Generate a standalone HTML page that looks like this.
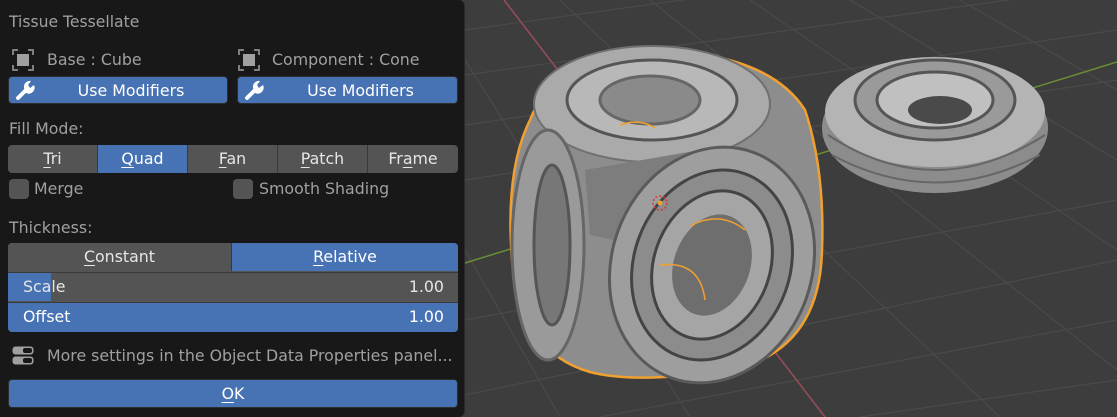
<!DOCTYPE html>
<html><head><style>
*{margin:0;padding:0;box-sizing:border-box}
body{width:1117px;height:417px;overflow:hidden;background:#3d3d3d;font-family:"DejaVu Sans","Liberation Sans",sans-serif;font-size:15.8px;position:relative}
.a{position:absolute}
#panel{left:0;top:0;width:465px;height:417px;background:#181818;border-right:1px solid #2a2a2a;border-radius:0 6px 6px 0}
.lbl{color:#a0a0a0;position:absolute;white-space:nowrap;line-height:18px}
.btn{position:absolute;background:#4772b3;color:#fff;border-radius:4px;text-align:center;line-height:27px;height:28px;border:1px solid #2d2d2d}
.seg{position:absolute;height:28px;line-height:28px;text-align:center;color:#e6e6e6;background:#545454;border-right:1px solid #3a3a3a}
.on{background:#4772b3;color:#fff}
.chk{position:absolute;width:20px;height:20px;background:#545454;border-radius:4px}
u{text-decoration:underline;text-underline-offset:3px}
</style></head><body>
<svg class="a" style="left:465px;top:0" width="652" height="417" viewBox="465 0 652 417">
<g stroke="#4a4a4a" stroke-width="1.2" fill="none">
<line x1="465" y1="30" x2="1117" y2="-60"/><line x1="465" y1="75" x2="1117" y2="-15"/>
<line x1="465" y1="125" x2="1117" y2="30"/><line x1="465" y1="180" x2="1117" y2="80"/>
<line x1="465" y1="320" x2="1117" y2="200"/><line x1="465" y1="395" x2="1117" y2="260"/>
<line x1="600" y1="417" x2="1117" y2="320"/><line x1="860" y1="417" x2="1117" y2="380"/>
<line x1="560" y1="0" x2="1000" y2="417"/><line x1="650" y1="0" x2="1117" y2="370"/>
<line x1="750" y1="0" x2="1117" y2="250"/><line x1="850" y1="0" x2="1117" y2="160"/>
<line x1="960" y1="0" x2="1117" y2="90"/><line x1="465" y1="60" x2="690" y2="417"/>
<line x1="465" y1="250" x2="560" y2="417"/>
</g>
<line x1="504" y1="0" x2="825" y2="417" stroke="#9c4c5a" stroke-width="1.5"/>
<line x1="465" y1="263" x2="1117" y2="62" stroke="#6b8e34" stroke-width="1.5"/>
<g>
<ellipse cx="935" cy="128" rx="113" ry="65" fill="#8c8c8c"/>
<ellipse cx="935" cy="112" rx="110" ry="55" fill="#b4b4b4"/>
<ellipse cx="935" cy="100" rx="80" ry="40" fill="#9a9a9a" stroke="#555" stroke-width="3"/>
<ellipse cx="935" cy="100" rx="58" ry="28" fill="#c0c0c0" stroke="#555" stroke-width="3"/>
<ellipse cx="940" cy="110" rx="32" ry="14" fill="#4a4a4a"/>
<path d="M828 135 Q935 205 1045 135" stroke="#666" stroke-width="2" fill="none"/>
<path d="M832 155 Q935 210 1040 155" stroke="#666" stroke-width="2" fill="none"/>
</g>
<path d="M530 120 Q555 55 660 50 Q770 55 805 110 Q825 170 822 250 Q820 345 740 368 Q640 385 590 372 Q520 352 512 260 Q505 170 530 120Z" fill="#8d8d8d" stroke="#f0a030" stroke-width="2.5"/>
<ellipse cx="652" cy="104" rx="118" ry="58" fill="#aaaaaa" stroke="#707070" stroke-width="2"/>
<ellipse cx="652" cy="100" rx="85" ry="40" fill="#b8b8b8" stroke="#555" stroke-width="3"/>
<ellipse cx="650" cy="100" rx="50" ry="24" fill="#8a8a8a" stroke="#666" stroke-width="3"/>
<polygon points="585,170 700,150 735,200 660,250 590,235" fill="#7d7d7d"/>
<ellipse cx="548" cy="245" rx="36" ry="115" fill="#9a9a9a" stroke="#666" stroke-width="3"/>
<ellipse cx="552" cy="245" rx="18" ry="80" fill="#777" stroke="#555" stroke-width="3"/>
<ellipse cx="712" cy="265" rx="100" ry="120" transform="rotate(20 712 265)" fill="#9e9e9e" stroke="#5a5a5a" stroke-width="3"/>
<ellipse cx="712" cy="265" rx="78" ry="97" transform="rotate(20 712 265)" fill="#8c8c8c" stroke="#444" stroke-width="3"/>
<ellipse cx="712" cy="265" rx="58" ry="76" transform="rotate(20 712 265)" fill="#a5a5a5" stroke="#444" stroke-width="3"/>
<ellipse cx="712" cy="265" rx="38" ry="52" transform="rotate(20 712 265)" fill="#6e6e6e"/>
<path d="M690 226 Q720 210 745 230" stroke="#f0a030" fill="none" stroke-width="1.5"/>
<path d="M660 265 Q700 260 705 300" stroke="#f0a030" fill="none" stroke-width="1.5"/>
<path d="M620 125 Q640 118 655 128" stroke="#f0a030" fill="none" stroke-width="1.5"/>
<circle cx="660" cy="203" r="7" fill="none" stroke="#d33" stroke-dasharray="2 2" stroke-width="1.5"/>
<circle cx="660" cy="203" r="2.5" fill="#f0a030"/>
</svg>
<div id="panel" class="a"></div>
<div class="lbl" style="left:9px;top:13px;font-size:15.6px">Tissue Tessellate</div>
<svg class="a" style="left:12px;top:49px" width="22" height="22"><path d="M1 6V1h5M16 1h5v5M21 16v5h-5M6 21H1v-5" stroke="#a0a0a0" fill="none" stroke-width="1.5"/><rect x="5" y="5" width="12" height="12" fill="#a0a0a0"/></svg>
<div class="lbl" style="left:47px;top:51px">Base : Cube</div>
<svg class="a" style="left:238px;top:49px" width="22" height="22"><path d="M1 6V1h5M16 1h5v5M21 16v5h-5M6 21H1v-5" stroke="#a0a0a0" fill="none" stroke-width="1.5"/><rect x="5" y="5" width="12" height="12" fill="#a0a0a0"/></svg>
<div class="lbl" style="left:272px;top:51px">Component : Cone</div>
<div class="btn" style="left:8px;top:76px;width:220px;padding-left:26px">Use Modifiers</div>
<div class="btn" style="left:237px;top:76px;width:221px;padding-left:26px">Use Modifiers</div>
<svg class="a" style="left:14px;top:79px" width="22" height="22"><path d="M4 19L12 11" stroke="#fff" stroke-width="4" stroke-linecap="round"/><path d="M10 9A6 6 0 0 1 17 2L14 6L16 9L20 6A6 6 0 0 1 12 14Z" fill="#fff"/></svg>
<svg class="a" style="left:243px;top:79px" width="22" height="22"><path d="M4 19L12 11" stroke="#fff" stroke-width="4" stroke-linecap="round"/><path d="M10 9A6 6 0 0 1 17 2L14 6L16 9L20 6A6 6 0 0 1 12 14Z" fill="#fff"/></svg>
<div class="lbl" style="left:9px;top:120px">Fill Mode:</div>
<div class="a" style="left:8px;top:145px;width:450px;height:28px;border-radius:4px;overflow:hidden">
<div class="seg" style="left:0;width:90px"><u>T</u>ri</div>
<div class="seg on" style="left:90px;width:90px"><u>Q</u>uad</div>
<div class="seg" style="left:180px;width:90px"><u>F</u>an</div>
<div class="seg" style="left:270px;width:90px"><u>P</u>atch</div>
<div class="seg" style="left:360px;width:90px;border:0">Fr<u>a</u>me</div>
</div>
<div class="chk" style="left:9px;top:179px"></div><div class="lbl" style="left:34px;top:180px">Merge</div>
<div class="chk" style="left:233px;top:179px"></div><div class="lbl" style="left:259px;top:180px">Smooth Shading</div>
<div class="lbl" style="left:9px;top:219px">Thickness:</div>
<div class="a" style="left:8px;top:243px;width:450px;height:89px;border-radius:4px;overflow:hidden;background:#545454">
<div class="seg" style="left:0;top:0;width:224px;border-right:1px solid #3a3a3a"><u>C</u>onstant</div>
<div class="seg on" style="left:224px;top:0;width:226px;border:0"><u>R</u>elative</div>
<div class="a" style="left:0;top:29px;width:450px;height:29px;background:#545454;border-top:1px solid #3a3a3a"></div>
<div class="a" style="left:0;top:30px;width:43px;height:28px;background:#4772b3"></div>
<div class="a" style="left:15px;top:30px;line-height:28px;color:#e6e6e6">Scale</div>
<div class="a" style="right:14px;top:30px;line-height:28px;color:#e6e6e6">1.00</div>
<div class="a" style="left:0;top:59px;width:450px;height:30px;background:#4772b3;border-top:1px solid #3a3a3a"></div>
<div class="a" style="left:15px;top:60px;line-height:28px;color:#fff">Offset</div>
<div class="a" style="right:14px;top:60px;line-height:28px;color:#fff">1.00</div>
</div>
<svg class="a" style="left:12px;top:346px" width="22" height="19"><rect x="0.5" y="0.5" width="21" height="8" rx="3" fill="#a0a0a0"/><rect x="11" y="2" width="9" height="5" rx="2" fill="#181818"/><rect x="0.5" y="10.5" width="21" height="8" rx="3" fill="#a0a0a0"/><rect x="11" y="12" width="9" height="5" rx="2" fill="#181818"/></svg>
<div class="lbl" style="left:47px;top:347px">More settings in the Object Data Properties panel...</div>
<div class="btn" style="left:8px;top:379px;width:450px;height:29px;line-height:28px"><u>O</u>K</div>
</body></html>
